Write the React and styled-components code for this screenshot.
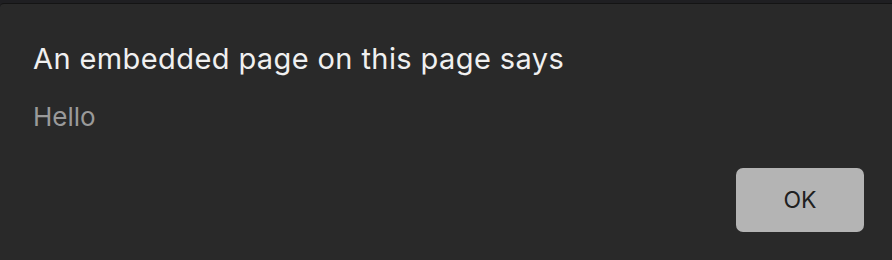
import styled, { createGlobalStyle } from "styled-components";

const Global = createGlobalStyle`
  html, body {
    margin: 0;
    padding: 0;
    background: #1f1f22;
  }
  body {
    font-family: Inter, "Noto Sans", sans-serif;
  }
`;

const Page = styled.div`
  width: 892px;
  height: 260px;
  padding-top: 3px;
  box-sizing: border-box;
  background: #1f1f22;
`;

const Dialog = styled.div`
  height: 257px;
  box-sizing: border-box;
  background: #292929;
  border-top: 1px solid #141414;
  border-top-left-radius: 4px;
  padding: 37px 28px 0 33px;
  display: flex;
  flex-direction: column;
`;

const Title = styled.h1`
  margin: 0;
  font-size: 29px;
  font-weight: 400;
  letter-spacing: 0.4px;
  line-height: 36px;
  color: #f0f0f0;
`;

const Message = styled.p`
  margin: 24px 0 0;
  font-size: 26px;
  line-height: 32px;
  color: #9a9a9a;
`;

const Footer = styled.div`
  display: flex;
  justify-content: flex-end;
  margin-top: 35px;
`;

const Button = styled.button`
  width: 128px;
  height: 64px;
  border: none;
  border-radius: 7px;
  background: #b4b4b4;
  color: #202020;
  font-family: Inter, "Noto Sans", sans-serif;
  font-size: 23px;
  cursor: pointer;
`;

export default function App() {
  return (
    <>
      <Global />
      <Page>
        <Dialog>
          <Title>An embedded page on this page says</Title>
          <Message>Hello</Message>
          <Footer>
            <Button>OK</Button>
          </Footer>
        </Dialog>
      </Page>
    </>
  );
}
